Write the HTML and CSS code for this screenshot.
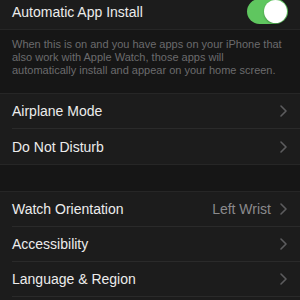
FILE: index.html
```html
<!doctype html>
<html lang="en">
<head>
	<meta charset="UTF-8">
	<title>General</title>
	<link rel="stylesheet" href="styles.css">
</head>
<body>
	<div class="settings">
		<ul class="group first">
			<li class="row">
				<span class="label">Automatic App Install</span>
				<span class="toggle on"><span class="knob"></span></span>
			</li>
		</ul>
		<p class="note">When this is on and you have apps on your iPhone that<br>also work with Apple Watch, those apps will<br>automatically install and appear on your home screen.</p>

		<ul class="group">
			<li class="row">
				<span class="label">Airplane Mode</span>
				<svg class="chevron" width="7" height="12" viewBox="0 0 7 12"><path d="M1 1l5 5-5 5" fill="none" stroke="#5c5c5e" stroke-width="1.6" stroke-linecap="round" stroke-linejoin="round"/></svg>
			</li>
			<li class="row">
				<span class="label">Do Not Disturb</span>
				<svg class="chevron" width="7" height="12" viewBox="0 0 7 12"><path d="M1 1l5 5-5 5" fill="none" stroke="#5c5c5e" stroke-width="1.6" stroke-linecap="round" stroke-linejoin="round"/></svg>
			</li>
		</ul>

		<div class="spacer"></div>

		<ul class="group">
			<li class="row">
				<span class="label">Watch Orientation</span>
				<span class="value">Left Wrist</span>
				<svg class="chevron" width="7" height="12" viewBox="0 0 7 12"><path d="M1 1l5 5-5 5" fill="none" stroke="#5c5c5e" stroke-width="1.6" stroke-linecap="round" stroke-linejoin="round"/></svg>
			</li>
			<li class="row">
				<span class="label">Accessibility</span>
				<svg class="chevron" width="7" height="12" viewBox="0 0 7 12"><path d="M1 1l5 5-5 5" fill="none" stroke="#5c5c5e" stroke-width="1.6" stroke-linecap="round" stroke-linejoin="round"/></svg>
			</li>
			<li class="row">
				<span class="label">Language &amp; Region</span>
				<svg class="chevron" width="7" height="12" viewBox="0 0 7 12"><path d="M1 1l5 5-5 5" fill="none" stroke="#5c5c5e" stroke-width="1.6" stroke-linecap="round" stroke-linejoin="round"/></svg>
			</li>
			<li class="row"></li>
		</ul>
	</div>
</body>
</html>
```

FILE: styles.css
```css
html,body{
	margin: 0;
	padding: 0;
	background-color: #161616;
}
ul{margin: 0;padding: 0;}
li{list-style-type: none;}
.settings{
	width: 300px;
	height: 300px;
	overflow: hidden;
	font-family: "Liberation Sans", Arial, sans-serif;
}
.group{
	background-color: #1c1c1c;
	border-top: 1px solid #262626;
	border-bottom: 1px solid #262626;
}
.group.first{
	margin-top: -6px;
	border-top: 0;
}
.row{
	display: flex;
	align-items: center;
	height: 35px;
	margin-left: 12px;
	padding-right: 13px;
	border-bottom: 1px solid #2a2a2a;
	box-sizing: border-box;
}
.row:last-child{
	border-bottom: 0;
}
.label{
	flex: 1;
	font-size: 14px;
	color: #ececec;
}
.value{
	font-size: 14px;
	color: #8a8a8c;
	margin-right: 9px;
}
.chevron{
	display: block;
}
.toggle{
	width: 41px;
	height: 25px;
	border-radius: 13px;
	margin-right: -1px;
	background-color: #5fc65f;
	display: flex;
	align-items: center;
	justify-content: flex-end;
	padding: 0 1px;
	box-sizing: border-box;
}
.knob{
	width: 23px;
	height: 23px;
	border-radius: 50%;
	background-color: #fff;
	box-shadow: 0 1px 2px rgba(0,0,0,0.3);
}
.note{
	margin: 0;
	padding: 8px 12px 0;
	font-size: 11px;
	line-height: 13px;
	color: #6b6b6d;
	height: 63px;
	box-sizing: border-box;
}
.spacer{
	height: 26px;
}
```
